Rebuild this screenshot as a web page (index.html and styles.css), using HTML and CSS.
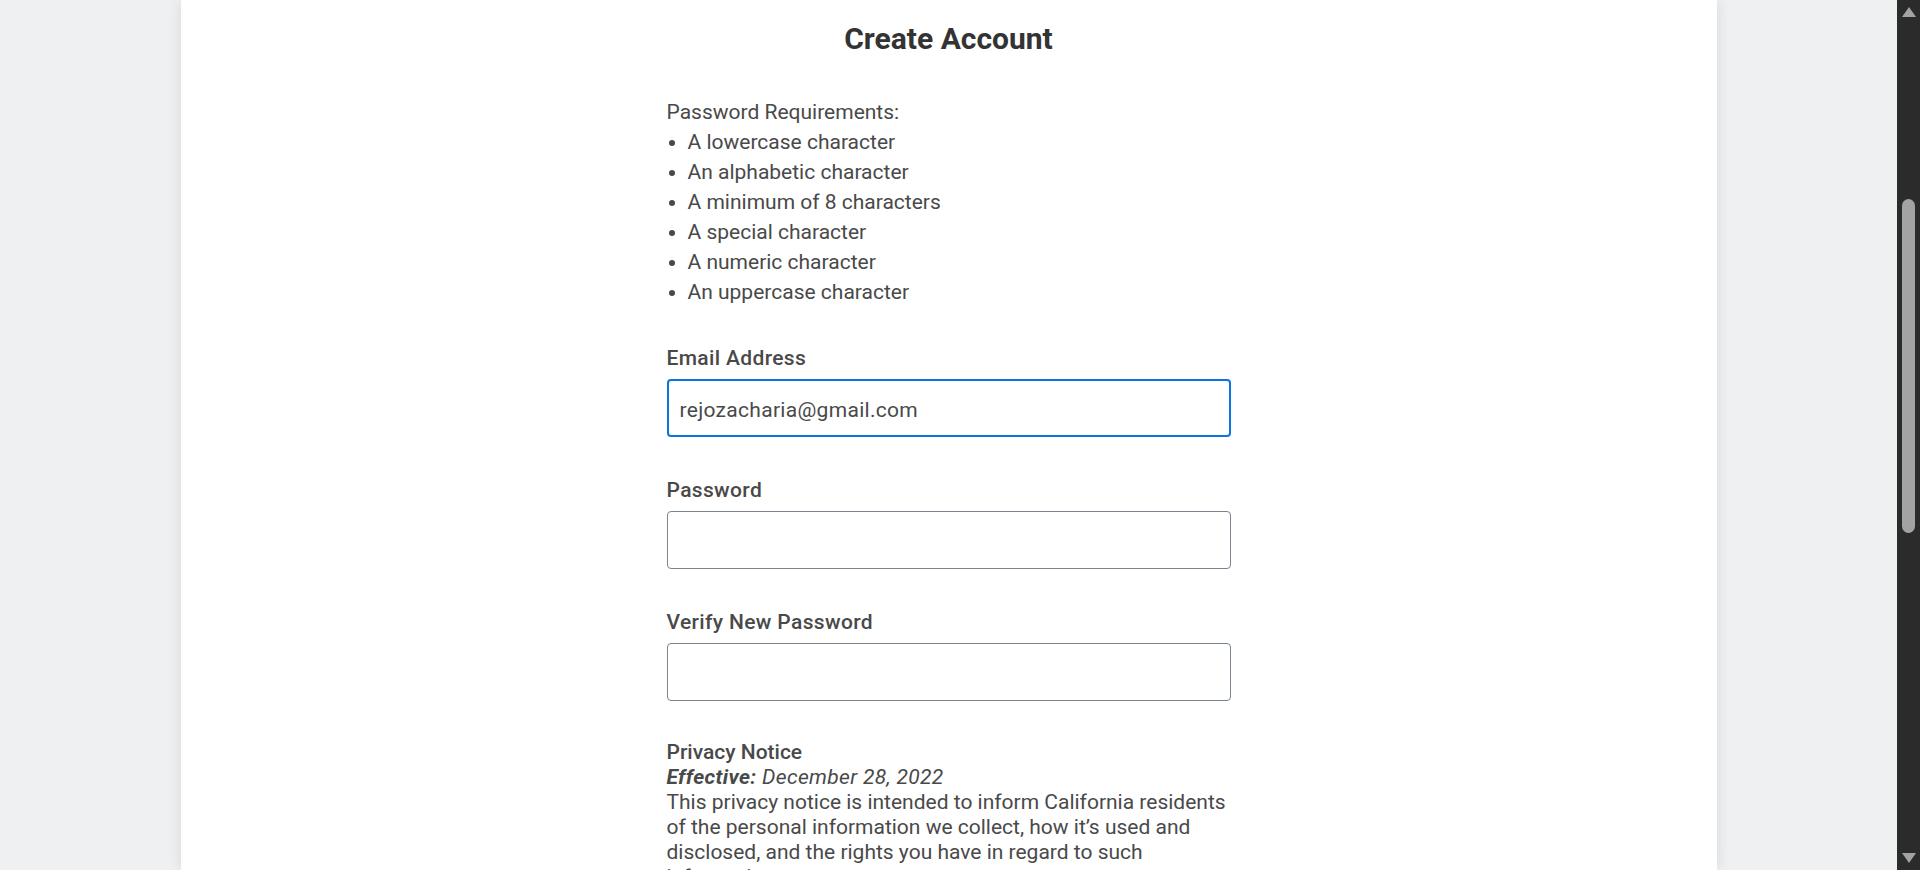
FILE: index.html
```html
<!DOCTYPE html>
<html lang="en">
<head>
<meta charset="utf-8">
<title>Create Account</title>
<link rel="stylesheet" href="styles.css">
</head>
<body>
<div class="app">
  <main class="main">
    <section class="card">
      <div class="content">
        <h1 class="title">Create Account</h1>
        <div class="reqs">
          <p class="reqs-head">Password Requirements:</p>
          <ul class="reqs-list">
            <li>A lowercase character</li>
            <li>An alphabetic character</li>
            <li>A minimum of 8 characters</li>
            <li>A special character</li>
            <li>A numeric character</li>
            <li>An uppercase character</li>
          </ul>
        </div>
        <div class="field">
          <label class="label" for="email">Email Address</label>
          <input class="input input-focus" id="email" type="text" value="rejozacharia@gmail.com">
        </div>
        <div class="field">
          <label class="label" for="pw">Password</label>
          <input class="input" id="pw" type="password">
        </div>
        <div class="field">
          <label class="label" for="pw2">Verify New Password</label>
          <input class="input" id="pw2" type="password">
        </div>
        <div class="privacy">
          <div class="privacy-title">Privacy Notice</div>
          <div class="privacy-date"><strong>Effective:</strong> December 28, 2022</div>
          <p class="privacy-text">This privacy notice is intended to inform California residents of the personal information we collect, how it’s used and disclosed, and the rights you have in regard to such information.</p>
        </div>
      </div>
    </section>
  </main>
  <div class="scrollbar">
    <div class="sb-arrow sb-up"></div>
    <div class="sb-track">
      <div class="sb-thumb"></div>
    </div>
    <div class="sb-arrow sb-down"></div>
  </div>
</div>
</body>
</html>
```

FILE: styles.css
```css
* { box-sizing: border-box; }
html, body {
  margin: 0;
  padding: 0;
  height: 100%;
  overflow: hidden;
}
body {
  font-family: Roboto, "Liberation Sans", Arial, sans-serif;
  color: #494949;
  background: #f0f1f3;
}
.app {
  display: flex;
  height: 100vh;
}
.main {
  flex: 1;
  display: flex;
  justify-content: center;
  background: #eff0f2;
  overflow: hidden;
}
.card {
  width: 1536px;
  background: #ffffff;
  box-shadow: 0 0 14px rgba(0, 0, 0, 0.10);
  padding-top: 21px;
}
.content {
  width: 564px;
  margin: 0 auto;
}
.title {
  margin: 0;
  font-size: 30px;
  line-height: 36px;
  font-weight: 700;
  color: #333333;
  text-align: center;
}
.reqs {
  margin-top: 40px;
  font-size: 21px;
  line-height: 30px;
}
.reqs-head { margin: 0; }
.reqs-list {
  margin: 0;
  padding-left: 21px;
}
.field {
  margin-top: 39px;
  display: flex;
  flex-direction: column;
}
.field + .field { margin-top: 41px; }
.label {
  font-size: 21px;
  line-height: 24px;
  font-weight: 500;
  letter-spacing: 0.35px;
  color: #494949;
  margin-bottom: 9px;
}
.input {
  width: 564px;
  height: 58px;
  border: 1px solid #7b858f;
  border-radius: 4px;
  padding: 0 12px;
  font-family: Roboto, "Liberation Sans", Arial, sans-serif;
  font-size: 21px;
  color: #494949;
  background: #ffffff;
  outline: none;
}
.input-focus {
  border: 2px solid #0875e1;
  padding: 4px 11px 0;
  letter-spacing: 0.3px;
}
.privacy {
  margin-top: 39px;
  font-size: 21px;
  line-height: 25px;
  color: #494949;
}
.privacy-title { font-weight: 500; }
.privacy-date {
  font-style: italic;
  letter-spacing: 0.35px;
}
.privacy-date strong { font-weight: 700; }
.privacy-text { margin: 0; }
.scrollbar {
  width: 23px;
  background: #2b2b2b;
  display: flex;
  flex-direction: column;
  align-items: center;
}
.sb-arrow {
  width: 0;
  height: 0;
  border-left: 7px solid transparent;
  border-right: 7px solid transparent;
}
.sb-up {
  margin-top: 7px;
  border-bottom: 10px solid #a3a3a3;
}
.sb-down {
  margin-bottom: 7px;
  border-top: 10px solid #a3a3a3;
}
.sb-track {
  flex: 1;
  width: 100%;
  display: flex;
  justify-content: center;
  padding-top: 182px;
}
.sb-thumb {
  width: 13px;
  height: 334px;
  border-radius: 7px;
  background: #a3a3a3;
}
```
